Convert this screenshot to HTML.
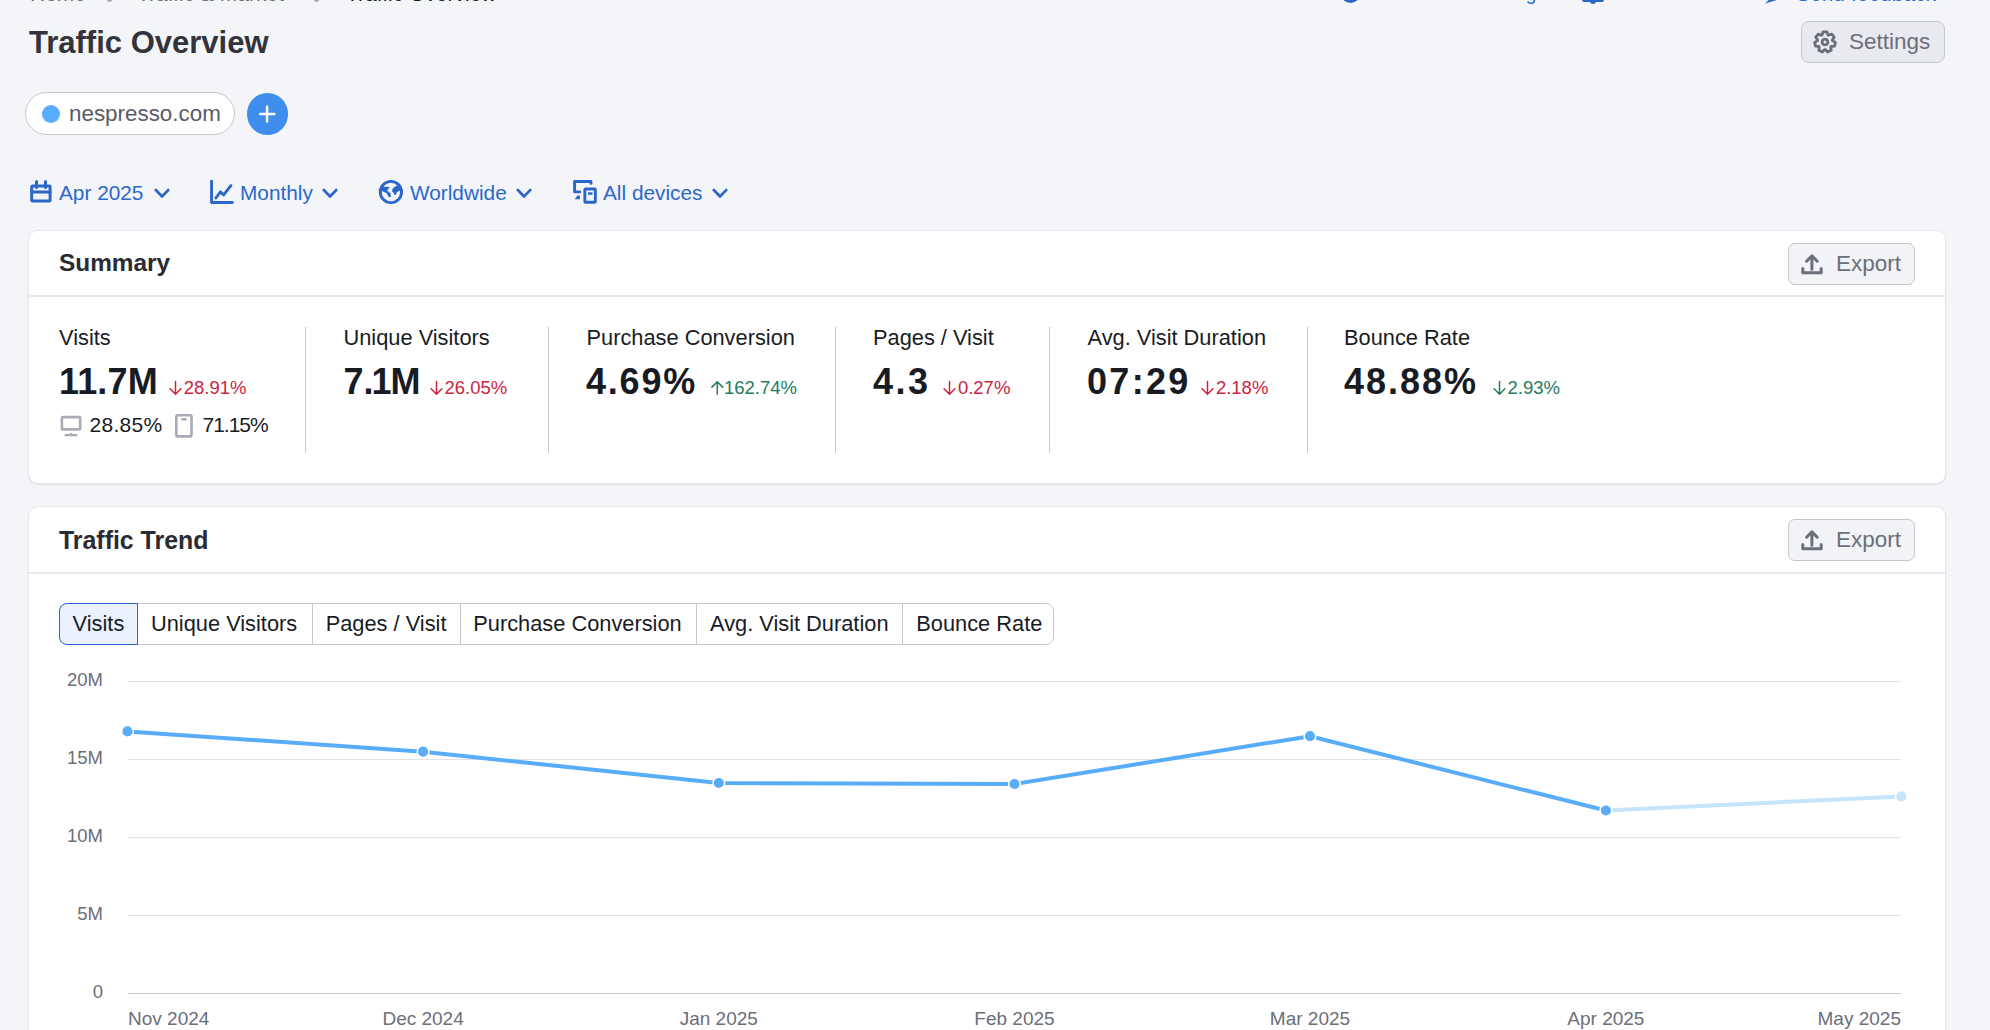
<!DOCTYPE html>
<html><head><meta charset="utf-8">
<style>
html,body{margin:0;padding:0;}
body{width:1990px;height:1030px;overflow:hidden;background:#f4f5f9;font-family:"Liberation Sans",sans-serif;position:relative;color:#191b23;}
.t{position:absolute;line-height:1;white-space:nowrap;}
.card{position:absolute;left:28px;width:1918px;background:#fff;border:1px solid #e6e7ed;border-radius:10px;box-sizing:border-box;box-shadow:0 1px 1.5px rgba(25,27,35,0.10);}
.hline{position:absolute;left:0;right:0;height:2px;background:#e6e7ed;}
.btn{position:absolute;box-sizing:border-box;border:1px solid #c4c7cf;border-radius:7px;background:#f2f3f6;}
.blue{color:#2a68cc;}
.red{color:#c9243f;}
.green{color:#237b5e;}
.gray{color:#6c6e79;}
.lab{font-size:21.8px;top:327.2px;}
.val{font-size:36px;top:363.5px;font-weight:bold;letter-spacing:-0.3px;}
.dl{font-size:18.5px;top:379.3px;}
.vdiv{position:absolute;top:327px;width:1px;height:126px;background:#c6c8d0;}
.tab{position:absolute;top:603px;height:42px;box-sizing:border-box;}
.tabt{font-size:21.8px;top:613px;}
svg{position:absolute;overflow:visible;}
</style></head>
<body>
<!-- breadcrumbs (cut off at top) -->
<div class="t gray" style="left:30px;top:-17.3px;font-size:21px;">Home</div>
<div class="t gray" style="left:137px;top:-17.3px;font-size:21px;">Traffic &amp; Market</div>
<div class="t" style="left:346px;top:-17.3px;font-size:21px;color:#191b23;">Traffic Overview</div>
<div class="t blue" style="left:1384px;top:-16.5px;font-size:19px;letter-spacing:-0.6px;">Product walkthrough</div>
<div class="t blue" style="left:1616px;top:-18.5px;font-size:20px;">User manual</div>
<div class="t blue" style="left:1796px;top:-16.8px;font-size:21px;">Send feedback</div>
<div style="position:absolute;left:1341px;top:-16px;width:19px;height:19px;border-radius:50%;background:#2b66c9;"></div>
<div style="position:absolute;left:1582px;top:-15px;width:22px;height:17px;border-radius:2px;background:#2b66c9;"></div><div style="position:absolute;left:1590px;top:1px;width:6px;height:3px;background:#2b66c9;border-radius:0 0 3px 3px;"></div>
<svg style="left:1765px;top:-10px;" width="12" height="14" viewBox="0 0 12 14"><path d="M0 13.5L12 2V10z" fill="#2b66c9"/></svg>

<div style="position:absolute;left:107px;top:-4px;width:5px;height:6px;border-radius:2px;background:#a9abb6;"></div>
<div style="position:absolute;left:314px;top:-4px;width:5px;height:6px;border-radius:2px;background:#a9abb6;"></div>
<!-- title -->
<div class="t" style="left:29px;top:26.7px;font-size:31px;font-weight:bold;color:#33343b;">Traffic Overview</div>

<!-- settings -->
<div class="btn" style="left:1801px;top:21px;width:144px;height:42px;border-radius:8px;background:#e9eaef;"></div>
<svg style="left:1811px;top:28px;" width="28" height="28" viewBox="0 0 28 28"><path fill="none" stroke="#6c6e79" stroke-width="2.8" stroke-linejoin="round" d="M10.98 7.03 L12.05 3.78 L15.95 3.78 L17.02 7.03 L17.57 7.29 L20.77 6.11 L23.20 9.15 L21.34 12.01 L21.47 12.61 L24.39 14.37 L23.53 18.17 L20.13 18.49 L19.75 18.97 L20.19 22.36 L16.68 24.05 L14.31 21.59 L13.69 21.59 L11.32 24.05 L7.81 22.36 L8.25 18.97 L7.87 18.49 L4.47 18.17 L3.61 14.37 L6.53 12.61 L6.66 12.01 L4.80 9.15 L7.23 6.11 L10.43 7.29Z"/><circle cx="14" cy="14" r="2.9" fill="none" stroke="#6c6e79" stroke-width="2.8"/></svg>
<div class="t gray" style="left:1849px;top:31.2px;font-size:22.5px;">Settings</div>

<!-- domain pill -->
<div style="position:absolute;left:25px;top:92px;width:210px;height:43px;box-sizing:border-box;border:1px solid #c4c7cf;border-radius:22px;background:#fff;"></div>
<div style="position:absolute;left:42px;top:105px;width:18px;height:18px;border-radius:50%;background:#59adff;"></div>
<div class="t" style="left:69px;top:102.7px;font-size:22.4px;color:#5a5c66;">nespresso.com</div>
<div style="position:absolute;left:246.8px;top:93.2px;width:41.2px;height:41.6px;border-radius:50%;background:#3f8ded;"></div>
<svg style="left:247px;top:93px;" width="41" height="41" viewBox="0 0 41 41"><path d="M20.1 13.8v14.6M13.3 21.1h14" stroke="#fff" stroke-width="2.5" stroke-linecap="round"/></svg>

<div style="position:absolute;left:0;top:164px;width:1990px;height:1px;background:#eff0f4;"></div>
<!-- filters -->
<svg style="left:26px;top:176px;" width="34" height="30" viewBox="0 0 34 30"><g fill="none" stroke="#2b66c9" stroke-width="3" stroke-linecap="round"><rect x="5.7" y="10" width="18.4" height="15" rx="1"/><path d="M5.7 16.05h18.4"/><path d="M10.5 5.6v6M19.5 5.6v6"/></g></svg>
<div class="t blue" style="left:59px;top:182.7px;font-size:20.8px;">Apr 2025</div>
<svg style="left:150px;top:182px;" width="24" height="22" viewBox="0 0 24 22"><path d="M5.8 8.1l6.3 6.3 6.1-6.3" fill="none" stroke="#2b66c9" stroke-width="2.8" stroke-linecap="round" stroke-linejoin="round"/></svg>
<svg style="left:205px;top:176px;" width="34" height="30" viewBox="0 0 34 30"><g fill="none" stroke="#2b66c9" stroke-width="2.9" stroke-linecap="round" stroke-linejoin="round"><path d="M6.56 5.2v21.3h20.8"/><path d="M10.9 22l4.5-6.1 3.2 3 7.3-9.3"/></g></svg>
<div class="t blue" style="left:240px;top:182.7px;font-size:20.8px;">Monthly</div>
<svg style="left:318px;top:182px;" width="24" height="22" viewBox="0 0 24 22"><path d="M5.8 8.1l6.3 6.3 6.1-6.3" fill="none" stroke="#2b66c9" stroke-width="2.8" stroke-linecap="round" stroke-linejoin="round"/></svg>
<svg style="left:374px;top:176px;" width="34" height="30" viewBox="0 0 34 30"><defs><clipPath id="gc"><circle cx="16.9" cy="16" r="11"/></clipPath></defs><circle cx="16.9" cy="16" r="10.65" fill="none" stroke="#2b66c9" stroke-width="2.9"/><g clip-path="url(#gc)" fill="#2b66c9"><path d="M5 10.8L9.9 10.8 16 11.1 13.1 14.6 16.6 17.5 16.9 20.4 15.4 21.6 14 20.1 12.8 17.2 7.9 14.9 5 14.9z"/><path d="M23 9.6L20.4 11.1 18.4 13.1 18.1 15.4 19.8 16.9 20.4 18.9 21.6 18.9 23 16.3 25.6 14.6 28 14 28 9.6z"/></g></svg>
<div class="t blue" style="left:410px;top:182.7px;font-size:20.8px;">Worldwide</div>
<svg style="left:512px;top:182px;" width="24" height="22" viewBox="0 0 24 22"><path d="M5.8 8.1l6.3 6.3 6.1-6.3" fill="none" stroke="#2b66c9" stroke-width="2.8" stroke-linecap="round" stroke-linejoin="round"/></svg>
<svg style="left:568px;top:176px;" width="34" height="30" viewBox="0 0 34 30"><g fill="none" stroke="#2b66c9" stroke-width="2.9" stroke-linecap="round" stroke-linejoin="round"><path d="M11.7 15.9H6.6V5.5H23v1.9"/><rect x="16.85" y="12.95" width="10.5" height="13.3" rx="0.8"/></g><path fill="#2b66c9" d="M6.7 23.3h5.2v-3.8H9.5z"/><rect x="20.1" y="16.3" width="4.4" height="2.5" fill="#2b66c9"/></svg>
<div class="t blue" style="left:603px;top:182.7px;font-size:20.8px;">All devices</div>
<svg style="left:708px;top:182px;" width="24" height="22" viewBox="0 0 24 22"><path d="M5.8 8.1l6.3 6.3 6.1-6.3" fill="none" stroke="#2b66c9" stroke-width="2.8" stroke-linecap="round" stroke-linejoin="round"/></svg>

<!-- SUMMARY_CARD -->
<div class="card" style="top:230px;height:254px;"><div class="hline" style="top:64px;"></div></div>
<div class="t" style="left:59px;top:251.3px;font-size:24.4px;font-weight:bold;color:#2a2b33;">Summary</div>
<div class="btn" style="left:1788px;top:243px;width:127px;height:42px;"></div>
<svg style="left:1801px;top:253px;" width="22" height="22" viewBox="0 0 22 22"><g fill="none" stroke="#6c6e79" stroke-width="3" stroke-linecap="round" stroke-linejoin="round"><path d="M10.9 16.3V3M5.6 8.2l5.3-5.4 5.3 5.4"/><path d="M1.8 15.6v4.1h18.4v-4.1"/></g></svg>
<div class="t gray" style="left:1836px;top:253.3px;font-size:22.5px;">Export</div>
<div class="t lab" style="left:59px;">Visits</div>
<div class="t val" style="left:59px;letter-spacing:0.15px;">11.7M</div>
<svg style="left:170.3px;top:381.5px;" width="11" height="13" viewBox="0 0 11 13"><path d="M5.5 -0.5v12.6M0.1 6.8l5.4 5.4 5.4-5.4" fill="none" stroke="#c9243f" stroke-width="1.5" stroke-linecap="round" stroke-linejoin="round"/></svg>
<div class="t dl" style="left:183.8px;color:#c9243f;">28.91%</div>
<div class="t lab" style="left:343.5px;">Unique Visitors</div>
<div class="t val" style="left:343.5px;letter-spacing:0;">7.<span style="margin-left:-2px;margin-right:-1px;">1</span>M</div>
<svg style="left:431px;top:381.5px;" width="11" height="13" viewBox="0 0 11 13"><path d="M5.5 -0.5v12.6M0.1 6.8l5.4 5.4 5.4-5.4" fill="none" stroke="#c9243f" stroke-width="1.5" stroke-linecap="round" stroke-linejoin="round"/></svg>
<div class="t dl" style="left:444.5px;color:#c9243f;">26.05%</div>
<div class="t lab" style="left:586.5px;">Purchase Conversion</div>
<div class="t val" style="left:586px;letter-spacing:1.8px;">4.69%</div>
<svg style="left:712px;top:381.5px;" width="11" height="13" viewBox="0 0 11 13"><path d="M5.3 12.3V-0.1M-0.1 5.1l5.4-5.3 5.4 5.3" fill="none" stroke="#237b5e" stroke-width="1.5" stroke-linecap="round" stroke-linejoin="round"/></svg>
<div class="t dl" style="left:724px;color:#237b5e;">162.74%</div>
<div class="t lab" style="left:873px;">Pages / Visit</div>
<div class="t val" style="left:873px;letter-spacing:2.45px;">4.3</div>
<svg style="left:944.4px;top:381.5px;" width="11" height="13" viewBox="0 0 11 13"><path d="M5.5 -0.5v12.6M0.1 6.8l5.4 5.4 5.4-5.4" fill="none" stroke="#c9243f" stroke-width="1.5" stroke-linecap="round" stroke-linejoin="round"/></svg>
<div class="t dl" style="left:957.9px;color:#c9243f;">0.27%</div>
<div class="t lab" style="left:1087.5px;">Avg. Visit Duration</div>
<div class="t val" style="left:1087px;letter-spacing:2.3px;">07:29</div>
<svg style="left:1202.4px;top:381.5px;" width="11" height="13" viewBox="0 0 11 13"><path d="M5.5 -0.5v12.6M0.1 6.8l5.4 5.4 5.4-5.4" fill="none" stroke="#c9243f" stroke-width="1.5" stroke-linecap="round" stroke-linejoin="round"/></svg>
<div class="t dl" style="left:1215.9px;color:#c9243f;">2.18%</div>
<div class="t lab" style="left:1344px;">Bounce Rate</div>
<div class="t val" style="left:1344px;letter-spacing:2.0px;">48.88%</div>
<svg style="left:1494px;top:381.5px;" width="11" height="13" viewBox="0 0 11 13"><path d="M5.5 -0.5v12.6M0.1 6.8l5.4 5.4 5.4-5.4" fill="none" stroke="#237b5e" stroke-width="1.5" stroke-linecap="round" stroke-linejoin="round"/></svg>
<div class="t dl" style="left:1507.5px;color:#237b5e;">2.93%</div>
<div class="vdiv" style="left:305px;"></div>
<div class="vdiv" style="left:548px;"></div>
<div class="vdiv" style="left:835px;"></div>
<div class="vdiv" style="left:1049px;"></div>
<div class="vdiv" style="left:1307px;"></div>
<svg style="left:56px;top:410px;" width="30" height="30" viewBox="0 0 30 30"><g fill="none" stroke="#a9abb6" stroke-width="2.6" stroke-linejoin="round"><rect x="5.9" y="7.1" width="18.3" height="12.3" rx="1"/></g><path d="M9.3 26.3h11.4a1.2 1.2 0 0 0 0-2.3h-3.7l-1.1-1h-1.8l-1.1 1H9.3a1.2 1.2 0 0 0 0 2.3z" fill="#a9abb6"/></svg>
<div class="t" style="left:89.5px;top:414.4px;font-size:21px;letter-spacing:0.3px;">28.85%</div>
<svg style="left:170px;top:410px;" width="28" height="32" viewBox="0 0 28 32"><rect x="6.3" y="5.3" width="15.2" height="21.1" rx="1.5" fill="none" stroke="#a9abb6" stroke-width="2.6"/><rect x="11.3" y="8" width="5.3" height="2.6" fill="#a9abb6"/></svg>
<div class="t" style="left:202.5px;top:414.4px;font-size:21px;letter-spacing:-1px;">71.15%</div>

<!-- TREND_CARD -->
<div class="card" style="top:506px;height:600px;"><div class="hline" style="top:65px;"></div></div>
<div class="t" style="left:59px;top:527.5px;font-size:24.9px;font-weight:bold;color:#2a2b33;">Traffic Trend</div>
<div class="btn" style="left:1788px;top:519px;width:127px;height:42px;"></div>
<svg style="left:1801px;top:529px;" width="22" height="22" viewBox="0 0 22 22"><g fill="none" stroke="#6c6e79" stroke-width="3" stroke-linecap="round" stroke-linejoin="round"><path d="M10.9 16.3V3M5.6 8.2l5.3-5.4 5.3 5.4"/><path d="M1.8 15.6v4.1h18.4v-4.1"/></g></svg>
<div class="t gray" style="left:1836px;top:529.3px;font-size:22.5px;">Export</div>
<div style="position:absolute;left:59px;top:603px;width:995px;height:42px;box-sizing:border-box;border:1px solid #c4c7cf;border-radius:8px;background:#fff;"></div>
<div style="position:absolute;left:312px;top:603px;width:1px;height:42px;background:#c4c7cf;"></div>
<div style="position:absolute;left:460px;top:603px;width:1px;height:42px;background:#c4c7cf;"></div>
<div style="position:absolute;left:696px;top:603px;width:1px;height:42px;background:#c4c7cf;"></div>
<div style="position:absolute;left:902px;top:603px;width:1px;height:42px;background:#c4c7cf;"></div>
<div style="position:absolute;left:59px;top:603px;width:79px;height:42px;box-sizing:border-box;border:1px solid #2b66c9;border-radius:8px 0 0 8px;background:#ebf2fd;"></div>
<div class="t tabt" style="left:72.6px;">Visits</div>
<div class="t tabt" style="left:151px;">Unique Visitors</div>
<div class="t tabt" style="left:325.7px;">Pages / Visit</div>
<div class="t tabt" style="left:473.3px;">Purchase Conversion</div>
<div class="t tabt" style="left:710px;">Avg. Visit Duration</div>
<div class="t tabt" style="left:916.3px;">Bounce Rate</div>
<svg style="left:0;top:0;" width="1990" height="1030" viewBox="0 0 1990 1030">
<line x1="128" y1="681.5" x2="1901" y2="681.5" stroke="#e0e1e9" stroke-width="1"/>
<line x1="128" y1="759.5" x2="1901" y2="759.5" stroke="#e0e1e9" stroke-width="1"/>
<line x1="128" y1="837.5" x2="1901" y2="837.5" stroke="#e0e1e9" stroke-width="1"/>
<line x1="128" y1="915.5" x2="1901" y2="915.5" stroke="#e0e1e9" stroke-width="1"/>
<line x1="128" y1="993.5" x2="1901" y2="993.5" stroke="#c4c7cf" stroke-width="1"/>
<polyline points="1605.9,810.5 1901.3,796.4" fill="none" stroke="#c6e4fc" stroke-width="4"/>
<polyline points="127.5,731.4 423.1,751.7 718.8,783 1014.5,784 1310,736.2 1605.9,810.5" fill="none" stroke="#59adf8" stroke-width="4" stroke-linejoin="round"/>
<circle cx="127.5" cy="731.4" r="5.85" fill="#59adf8" stroke="#fff" stroke-width="1.5"/>
<circle cx="423.1" cy="751.7" r="5.85" fill="#59adf8" stroke="#fff" stroke-width="1.5"/>
<circle cx="718.8" cy="783" r="5.85" fill="#59adf8" stroke="#fff" stroke-width="1.5"/>
<circle cx="1014.5" cy="784" r="5.85" fill="#59adf8" stroke="#fff" stroke-width="1.5"/>
<circle cx="1310" cy="736.2" r="5.85" fill="#59adf8" stroke="#fff" stroke-width="1.5"/>
<circle cx="1605.9" cy="810.5" r="5.85" fill="#59adf8" stroke="#fff" stroke-width="1.5"/>
<circle cx="1901.3" cy="796.4" r="5.85" fill="#c6e4fc" stroke="#fff" stroke-width="1.5"/>
</svg>
<div class="t gray" style="right:1887px;top:671.1px;font-size:18.5px;text-align:right;">20M</div>
<div class="t gray" style="right:1887px;top:749.1px;font-size:18.5px;text-align:right;">15M</div>
<div class="t gray" style="right:1887px;top:827.1px;font-size:18.5px;text-align:right;">10M</div>
<div class="t gray" style="right:1887px;top:905.1px;font-size:18.5px;text-align:right;">5M</div>
<div class="t gray" style="right:1887px;top:983.1px;font-size:18.5px;text-align:right;">0</div>
<div class="t gray" style="left:128px;top:1008.92px;font-size:19px;">Nov 2024</div>
<div class="t gray" style="left:423.1px;transform:translateX(-50%);top:1008.92px;font-size:19px;">Dec 2024</div>
<div class="t gray" style="left:718.8px;transform:translateX(-50%);top:1008.92px;font-size:19px;">Jan 2025</div>
<div class="t gray" style="left:1014.5px;transform:translateX(-50%);top:1008.92px;font-size:19px;">Feb 2025</div>
<div class="t gray" style="left:1310px;transform:translateX(-50%);top:1008.92px;font-size:19px;">Mar 2025</div>
<div class="t gray" style="left:1605.9px;transform:translateX(-50%);top:1008.92px;font-size:19px;">Apr 2025</div>
<div class="t gray" style="right:89px;top:1008.92px;font-size:19px;">May 2025</div>

</body></html>
